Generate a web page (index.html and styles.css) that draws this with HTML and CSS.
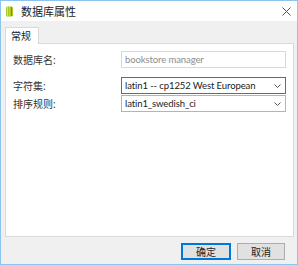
FILE: index.html
```html
<!DOCTYPE html>
<html lang="zh-CN">
<head>
  <meta charset="UTF-8" />
  <title>数据库属性</title>
  <link rel="stylesheet" href="styles.css">
</head>
<body>
  <div class="window">
    <div class="titlebar">
      <svg class="app-icon" width="7" height="11" viewBox="0 0 7 11">
        <rect x="0" y="0.5" width="7" height="10" rx="1.5" fill="#a8c820"/>
        <rect x="1" y="1" width="1" height="9" fill="#d8e858"/>
        <rect x="3" y="1" width="1" height="9" fill="#c8d838"/>
        <rect x="5" y="1" width="1" height="9" fill="#789810"/>
      </svg>
      <span class="title">数据库属性</span>
      <svg class="close" width="9" height="9" viewBox="0 0 9 9">
        <path d="M0.5 0.5 L8.5 8.5 M8.5 0.5 L0.5 8.5" stroke="#555" stroke-width="1" fill="none"/>
      </svg>
    </div>

    <div class="content">
      <div class="tabs">
        <div class="tab">常规</div>
      </div>
      <div class="panel">
        <div class="row">
          <label>数据库名:</label>
          <div class="field disabled">bookstore manager</div>
        </div>
        <div class="row gap">
          <label>字符集:</label>
          <div class="field select focused">
            <span>latin1 -- cp1252 West European</span>
            <svg width="7" height="4" viewBox="0 0 7 4"><path d="M0.5 0.5 L3.5 3.5 L6.5 0.5" stroke="#555" fill="none"/></svg>
          </div>
        </div>
        <div class="row">
          <label>排序规则:</label>
          <div class="field select">
            <span>latin1_swedish_ci</span>
            <svg width="7" height="4" viewBox="0 0 7 4"><path d="M0.5 0.5 L3.5 3.5 L6.5 0.5" stroke="#555" fill="none"/></svg>
          </div>
        </div>
      </div>
      <div class="footer">
        <button class="btn primary">确定</button>
        <button class="btn">取消</button>
      </div>
    </div>
  </div>
</body>
</html>
```

FILE: styles.css
```css
body {
  margin: 0;
  font-family: "Noto Sans", "Noto Sans CJK SC", sans-serif;
  font-size: 11px;
  color: #1a1a1a;
}
.window {
  width: 298px;
  height: 265px;
  box-sizing: border-box;
  border: 1px solid #8cc4ee;
  display: flex;
  flex-direction: column;
  background: #fff;
}
.titlebar {
  height: 20px;
  display: flex;
  align-items: center;
  padding-left: 5px;
  background: #fff;
}
.app-icon {
  margin-right: 8px;
  margin-top: 1px;
}
.title {
  font-size: 11px;
  color: #222;
}
.close {
  margin-left: auto;
  margin-right: 6px;
}
.content {
  flex: 1;
  background: #f0f0f0;
  padding: 6px 3px 0 4px;
  display: flex;
  flex-direction: column;
}
.tabs {
  display: flex;
  height: 16px;
}
.tab {
  width: 34px;
  box-sizing: border-box;
  border: 1px solid #d9d9d9;
  border-bottom: none;
  background: #fff;
  padding-left: 5px;
  line-height: 16px;
  font-size: 10px;
  position: relative;
  z-index: 1;
  height: 17px;
}
.panel {
  height: 194px;
  box-sizing: border-box;
  border: 1px solid #d9d9d9;
  background: #fff;
  padding: 7px 6px 0 7px;
}
.row {
  display: flex;
  align-items: center;
  height: 17px;
  margin-bottom: 1px;
}
.row.gap {
  margin-top: 9px;
}
.row label {
  width: 108px;
  font-size: 10px;
  color: #333;
}
.field {
  width: 165px;
  height: 17px;
  box-sizing: border-box;
  border: 1px solid #d0d0d0;
  padding-left: 3px;
  font-family: "Lato", "Noto Sans CJK SC", sans-serif;
  font-size: 9.5px;
  letter-spacing: -0.1px;
  white-space: nowrap;
  overflow: hidden;
  display: flex;
  align-items: center;
  justify-content: space-between;
}
.field.disabled {
  color: #8d8d8d;
  border-color: #d8d8d8;
}
.field.select {
  border-color: #b4b4b4;
  padding-right: 4px;
}
.field.focused {
  border-color: #6a6a6a;
}
.footer {
  display: flex;
  justify-content: flex-end;
  gap: 6px;
  padding: 6px 9px 0 0;
}
.btn {
  width: 48px;
  height: 17px;
  padding: 0;
  font-family: "Noto Sans CJK SC", sans-serif;
  font-size: 10px;
  background: #e1e1e1;
  border: 1px solid #adadad;
  color: #222;
}
.btn.primary {
  width: 50px;
  border: 1px solid #0078d7;
  box-shadow: inset 0 0 0 1px #0078d7;
}
```
